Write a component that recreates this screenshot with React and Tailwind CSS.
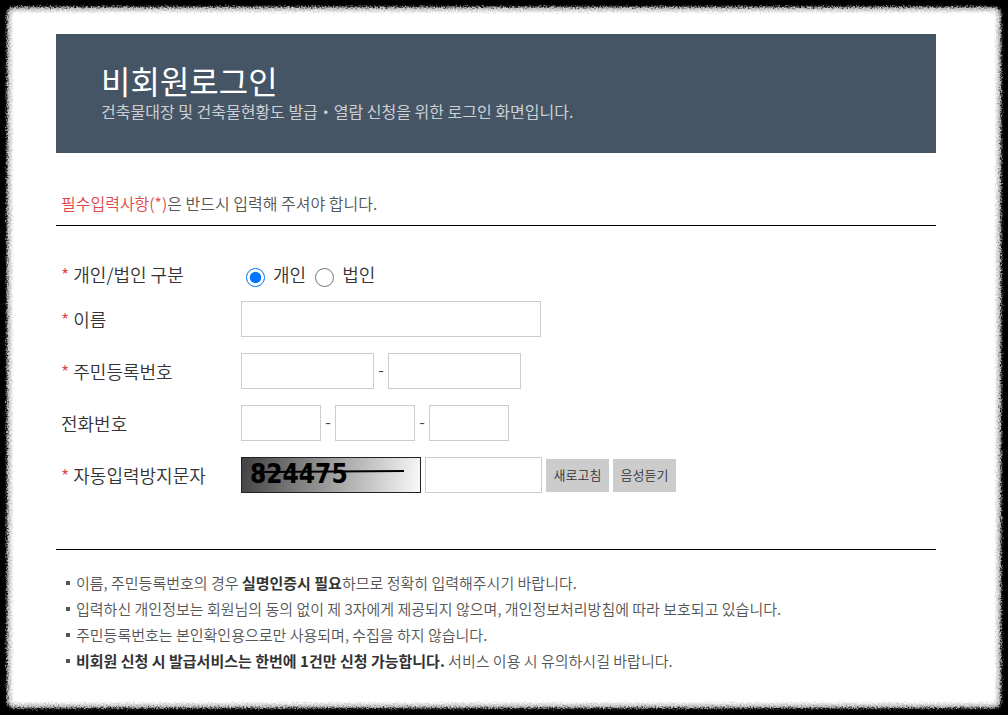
import { useState } from "react";

const fieldClass = "h-9 border border-[#ccc] bg-white px-2 text-base text-[#333] outline-none focus:border-[#455565]";

function RoughFrame() {
  return (
    <svg className="absolute inset-0 h-full w-full" aria-hidden="true">
      <defs>
        <filter id="rough-edge" x="-2%" y="-2%" width="104%" height="104%" colorInterpolationFilters="sRGB">
          <feGaussianBlur in="SourceGraphic" stdDeviation="0.8" result="soft" />
          <feTurbulence type="fractalNoise" baseFrequency="0.6" numOctaves="2" seed="4" result="noise" />
          <feDisplacementMap in="soft" in2="noise" scale="6" xChannelSelector="R" yChannelSelector="G" />
        </filter>
      </defs>
      <g filter="url(#rough-edge)">
        <svg x="7" y="7" width="100%" height="100%" overflow="visible">
          <rect className="h-[calc(100%-14px)] w-[calc(100%-14px)]" rx="7" fill="#c4c4c4" />
        </svg>
        <svg x="10" y="10" width="100%" height="100%" overflow="visible">
          <rect className="h-[calc(100%-20px)] w-[calc(100%-20px)]" rx="5" fill="#dcdcdc" />
        </svg>
        <svg x="12" y="12" width="100%" height="100%" overflow="visible">
          <rect className="h-[calc(100%-24px)] w-[calc(100%-24px)]" rx="4" fill="#fff" />
        </svg>
      </g>
    </svg>
  );
}

function Row({ label, htmlFor, required, children }) {
  return (
    <div className="flex min-h-9 items-center">
      <label htmlFor={htmlFor} className="w-[185px] shrink-0 pl-[5px] text-lg font-[350] text-[#333]">
        {required && <span className="mr-1 text-[#e04848]">*</span>}
        {label}
      </label>
      <div className="flex items-center gap-1">{children}</div>
    </div>
  );
}

function Dash() {
  return <span className="w-1.5 pb-1 text-center text-base text-[#444]">-</span>;
}

function Captcha() {
  return (
    <svg width="180" height="36" viewBox="0 0 180 36" overflow="visible" role="img" aria-label="자동입력방지문자">
      <defs>
        <linearGradient id="captcha-bg" gradientUnits="userSpaceOnUse" x1="0" y1="0" x2="185" y2="30">
          <stop offset="0" stopColor="#404040" />
          <stop offset="1" stopColor="#fff" />
        </linearGradient>
      </defs>
      <rect x="0.5" y="0.5" width="179" height="35" fill="url(#captcha-bg)" stroke="#222" />
      <text x="9" y="26" className="font-['DejaVu_Sans_Condensed','Open_Sans',sans-serif] text-[26px] font-bold">824475</text>
      <path d="M19 20 L23 15 L163 14" fill="none" stroke="#000" strokeWidth="2" />
    </svg>
  );
}

export default function App() {
  const [kind, setKind] = useState("personal");
  const kinds = [
    ["personal", "개인"],
    ["corporate", "법인"],
  ];

  return (
    <div className="relative min-h-screen bg-black font-['Noto_Sans_CJK_KR',sans-serif]">
      <RoughFrame />
      <main className="relative pt-[34px] pr-[72px] pb-10 pl-14">
        <header className="bg-[#455565] px-[45px] pt-7 pb-[30px]">
          <h1 className="text-[32px] leading-[37px] text-white">비회원로그인</h1>
          <p className="text-base text-[#ccd0d4]">건축물대장 및 건축물현황도 발급・열람 신청을 위한 로그인 화면입니다.</p>
        </header>

        <p className="mt-[38px] border-b border-black pb-[10px] pl-[5px] text-base font-[350] text-[#555]">
          <span className="text-[#e04848]">필수입력사항(*)</span>은 반드시 입력해 주셔야 합니다.
        </p>

        <form className="flex flex-col gap-4 border-b border-black pt-[34px] pb-14" onSubmit={(e) => e.preventDefault()}>
          <fieldset className="flex h-[25px] items-center">
            <legend className="float-left w-[185px] pl-[5px] text-lg font-[350] text-[#333]">
              <span className="mr-1 text-[#e04848]">*</span>개인/법인 구분
            </legend>
            <div className="flex gap-[9px] pl-[5px]">
              {kinds.map(([value, text]) => (
                <label key={value} className="flex items-center gap-2 text-lg font-[350] text-[#333]">
                  <input
                    type="radio"
                    name="kind"
                    value={value}
                    checked={kind === value}
                    onChange={() => setKind(value)}
                    className="mt-1.5 h-[19px] w-[19px]"
                  />
                  {text}
                </label>
              ))}
            </div>
          </fieldset>

          <Row label="이름" htmlFor="name" required>
            <input id="name" type="text" className={`${fieldClass} w-[300px]`} />
          </Row>

          <Row label="주민등록번호" htmlFor="rrn1" required>
            <input id="rrn1" type="text" maxLength={6} className={`${fieldClass} w-[133px]`} />
            <Dash />
            <input type="password" maxLength={7} aria-label="주민등록번호 뒷자리" className={`${fieldClass} w-[133px]`} />
          </Row>

          <Row label="전화번호" htmlFor="tel1">
            <input id="tel1" type="tel" className={`${fieldClass} w-20`} />
            <Dash />
            <input type="tel" aria-label="전화번호 가운데 자리" className={`${fieldClass} w-20`} />
            <Dash />
            <input type="tel" aria-label="전화번호 끝자리" className={`${fieldClass} w-20`} />
          </Row>

          <Row label="자동입력방지문자" htmlFor="captcha" required>
            <Captcha />
            <input id="captcha" type="text" className={`${fieldClass} w-[117px]`} />
            <button type="button" className="h-[33px] w-[63px] bg-[#ccc] text-[13px] font-[350] text-[#333]">새로고침</button>
            <button type="button" className="h-[33px] w-[63px] bg-[#ccc] text-[13px] font-[350] text-[#333]">음성듣기</button>
          </Row>
        </form>

        <ul className="mt-5 list-none pl-[10px] text-[15px] leading-[26px] font-[350] text-[#555] *:flex *:items-center *:gap-1.5 *:before:h-1 *:before:w-1 *:before:bg-[#555] *:before:content-['']">
          <li>
            <p>이름, 주민등록번호의 경우 <strong className="font-bold text-[#333]">실명인증시 필요</strong>하므로 정확히 입력해주시기 바랍니다.</p>
          </li>
          <li>
            <p>입력하신 개인정보는 회원님의 동의 없이 제 3자에게 제공되지 않으며, 개인정보처리방침에 따라 보호되고 있습니다.</p>
          </li>
          <li>
            <p>주민등록번호는 본인확인용으로만 사용되며, 수집을 하지 않습니다.</p>
          </li>
          <li>
            <p><strong className="font-bold text-[#333]">비회원 신청 시 발급서비스는 한번에 1건만 신청 가능합니다.</strong> 서비스 이용 시 유의하시길 바랍니다.</p>
          </li>
        </ul>
      </main>
    </div>
  );
}
